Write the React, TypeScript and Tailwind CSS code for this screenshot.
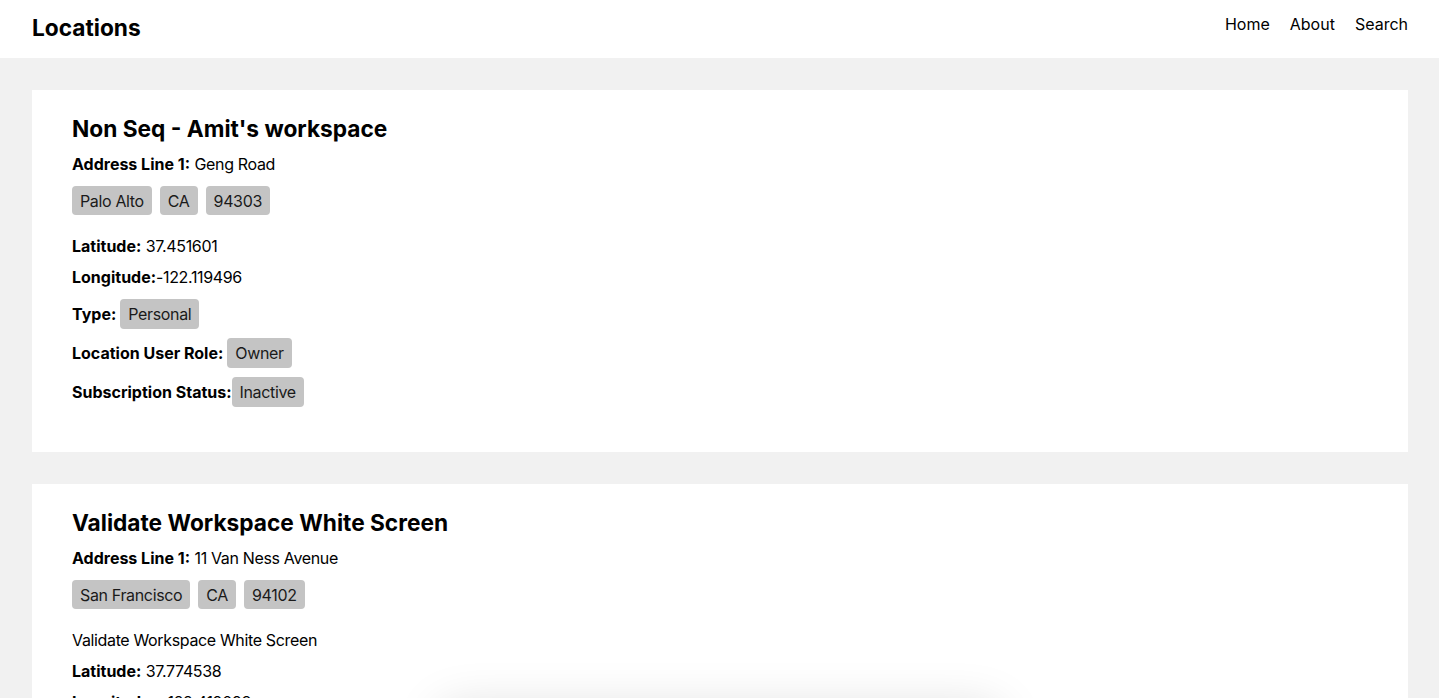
import React from "react";

function Chip({ children, className = "" }: { children: React.ReactNode; className?: string }) {
  return (
    <span className={`inline-flex h-[30px] items-center rounded-[4px] bg-[#c4c4c4] px-2 text-[16px] tracking-[-0.35px] text-[#1a1a1a] ${className}`}>
      {children}
    </span>
  );
}

function ChipRow({ items }: { items: string[] }) {
  return (
    <div className="mt-3 flex gap-2">
      {items.map((t) => (
        <span key={t} className="inline-flex h-[29px] items-center rounded-[4px] bg-[#c4c4c4] px-2 text-[16px] tracking-[-0.35px] text-[#1a1a1a]">
          {t}
        </span>
      ))}
    </div>
  );
}

type Loc = {
  name: string;
  address: string;
  city: string[];
  description?: string;
  lat: string;
  lng: string;
  lngSpace?: boolean;
  type: string;
  role: string;
  status: string;
};

function Card({ loc }: { loc: Loc }) {
  return (
    <div className="bg-white px-10 pb-[45px] pt-6">
      <h2 className="h-[30px] text-[22.7px] font-bold leading-[30px] text-black">{loc.name}</h2>
      <p className="mt-[10px] h-5 leading-5">
        <span className="font-bold">Address Line 1:</span>{" "}
        <span className="tracking-[-0.35px]">{loc.address}</span>
      </p>
      <ChipRow items={loc.city} />
      {loc.description && <p className="mt-[21px] h-5 leading-5 tracking-[-0.35px]">{loc.description}</p>}
      <p className={`${loc.description ? "mt-[11px]" : "mt-[21px]"} h-5 leading-5`}>
        <span className="font-bold">Latitude:</span> <span className="tracking-[-0.35px]">{loc.lat}</span>
      </p>
      <p className="mt-[11px] h-5 leading-5">
        <span className="font-bold">Longitude:</span>
        {loc.lngSpace ? " " : ""}
        <span className="tracking-[-0.35px]">{loc.lng}</span>
      </p>
      <div className="mt-3 flex items-center">
        <span className="font-bold">Type:</span>
        <Chip className="ml-1">{loc.type}</Chip>
      </div>
      <div className="mt-[9px] flex items-center">
        <span className="font-bold">Location User Role:</span>
        <Chip className="ml-1">{loc.role}</Chip>
      </div>
      <div className="mt-[9px] flex items-center">
        <span className="font-bold">Subscription Status:</span>
        <Chip>{loc.status}</Chip>
      </div>
    </div>
  );
}

const locations: Loc[] = [
  {
    name: "Non Seq - Amit's workspace",
    address: "Geng Road",
    city: ["Palo Alto", "CA", "94303"],
    lat: "37.451601",
    lng: "-122.119496",
    type: "Personal",
    role: "Owner",
    status: "Inactive",
  },
  {
    name: "Validate Workspace White Screen",
    address: "11 Van Ness Avenue",
    city: ["San Francisco", "CA", "94102"],
    description: "Validate Workspace White Screen",
    lat: "37.774538",
    lng: "-122.419098",
    lngSpace: true,
    type: "Personal",
    role: "Owner",
    status: "Inactive",
  },
];

export default function App() {
  return (
    <div className="min-h-screen bg-[#f1f1f1] text-[16px] text-black" style={{ fontFamily: "Inter, 'Noto Sans', sans-serif" }}>
      <header className="flex h-[58px] items-start justify-between bg-white pl-8 pr-[31px]">
        <h1 className="mt-[14px] text-[22.7px] font-bold leading-7">Locations</h1>
        <nav className="mt-[14px] flex gap-5 text-[16px] leading-5">
          <a>Home</a>
          <a>About</a>
          <a>Search</a>
        </nav>
      </header>
      <main className="flex flex-col gap-8 pb-8 pl-8 pr-[31px] pt-8">
        {locations.map((l) => (
          <Card key={l.name} loc={l} />
        ))}
      </main>
      <div className="fixed left-[440px] top-[708px] h-[80px] w-[560px] rounded-xl bg-white shadow-[0_0_50px_rgba(0,0,0,0.14)]" />
    </div>
  );
}
